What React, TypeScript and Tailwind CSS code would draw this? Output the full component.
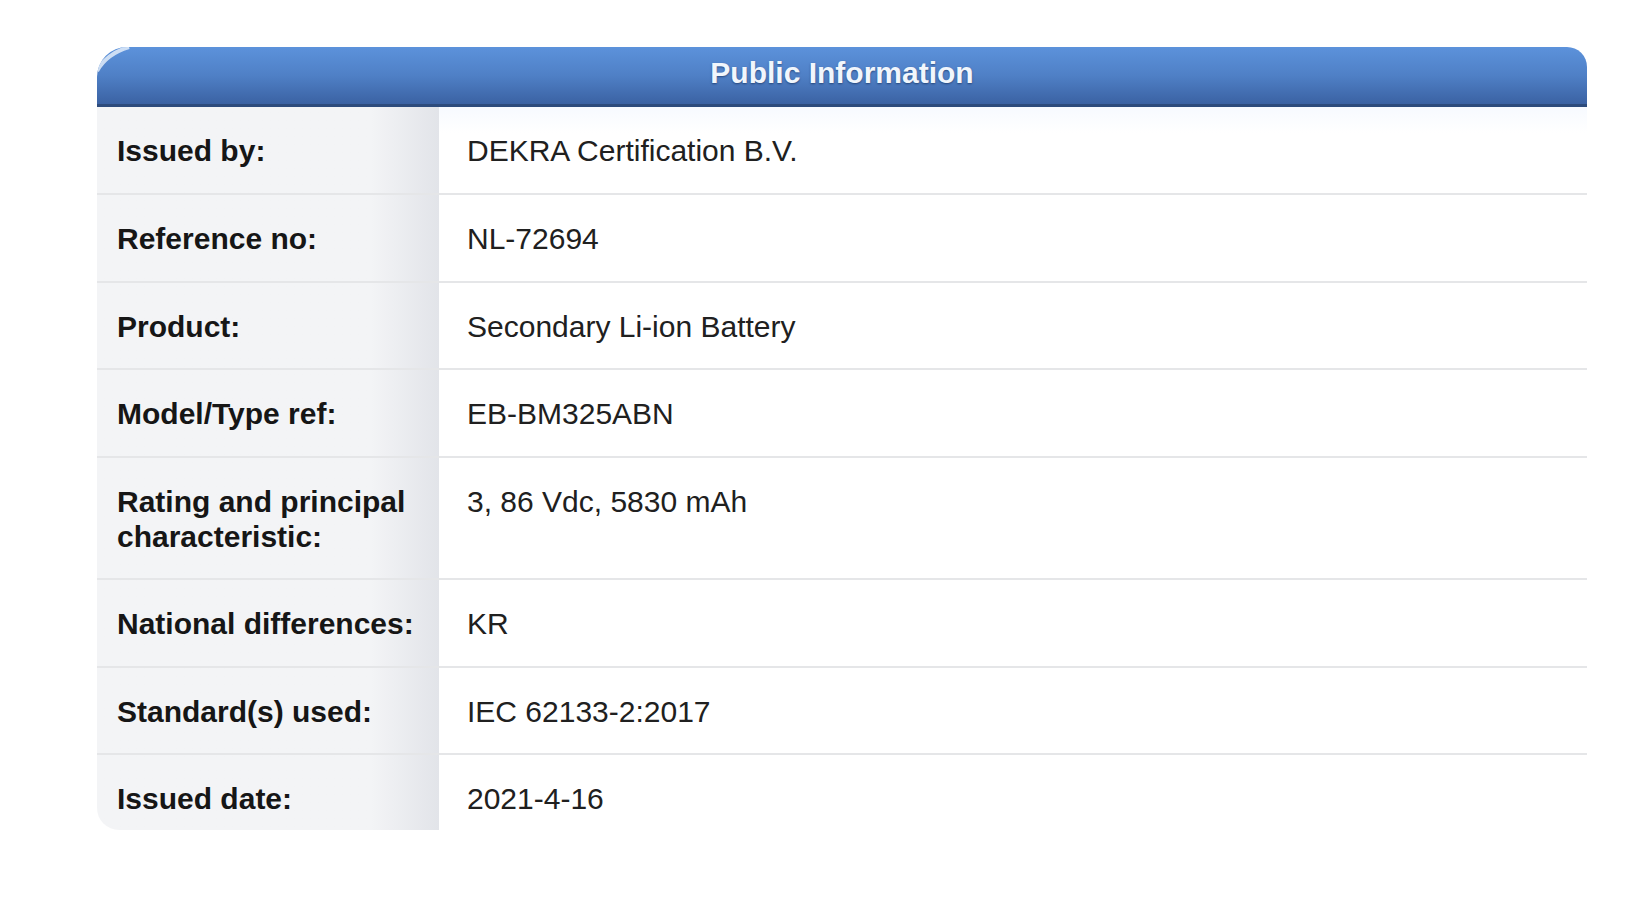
const ROWS: { label: string; value: string; h: string; tall?: boolean }[] = [
  { label: 'Issued by:', value: 'DEKRA Certification B.V.', h: 'h-[88px]' },
  { label: 'Reference no:', value: 'NL-72694', h: 'h-[88px]' },
  { label: 'Product:', value: 'Secondary Li-ion Battery', h: 'h-[87px]' },
  { label: 'Model/Type ref:', value: 'EB-BM325ABN', h: 'h-[88px]' },
  { label: 'Rating and principal characteristic:', value: '3, 86 Vdc, 5830 mAh', h: 'h-[122px]', tall: true },
  { label: 'National differences:', value: 'KR', h: 'h-[88px]' },
  { label: 'Standard(s) used:', value: 'IEC 62133-2:2017', h: 'h-[87px]' },
  { label: 'Issued date:', value: '2021-4-16', h: 'h-[75px]' },
]

export default function App() {
  return (
    <div className="min-h-[924px] w-[1650px] bg-white font-['Liberation_Sans',Arial,sans-serif]">
      <div className="ml-[97px] pt-[47px] w-[1490px]">
        {/* Header bar */}
        <div className="relative h-[60px] rounded-tl-[30px] rounded-tr-[20px] overflow-hidden bg-gradient-to-b from-[#5c92db] via-[#4f80c6] to-[#3b62a3] border-b-[3px] border-[#2d4b7c]">
          <svg className="absolute left-0 top-0" width="40" height="30" viewBox="0 0 40 30">
            <path d="M0 24 Q 9 7 32 0" stroke="#e2ecf9" strokeWidth="4" fill="none" opacity="0.85" />
          </svg>
          <div className="flex h-full items-center justify-center pb-[6px]">
            <span className="text-[30px] font-bold text-[#f1f6fc] [text-shadow:0_1px_2px_rgba(10,30,70,0.55)]">
              Public Information
            </span>
          </div>
        </div>

        {/* Rows */}
        <div className="rounded-bl-[22px] overflow-hidden">
          {ROWS.map((r, i) => {
            const last = i === ROWS.length - 1
            return (
              <div
                key={r.label}
                className={'flex box-border ' + r.h + (last ? '' : ' border-b-2 border-[#e5e6e8]')}
              >
                <div className="w-[342px] shrink-0 pl-[20px] pr-[10px] pt-[26px] bg-gradient-to-r from-[#f3f4f6] from-80% to-[#e2e4e9] text-[30px] leading-[35px] font-bold text-[#161616]">
                  {r.tall ? (
                    <>
                      Rating and principal
                      <br />
                      characteristic:
                    </>
                  ) : (
                    r.label
                  )}
                </div>
                <div className={'flex-1 pl-[28px] pt-[26px] text-[30px] leading-[35px] text-[#202020] ' + (i === 0 ? 'bg-gradient-to-b from-[#f7faff] to-white to-30%' : 'bg-white')}>
                  {r.value}
                </div>
              </div>
            )
          })}
        </div>
      </div>
    </div>
  )
}
